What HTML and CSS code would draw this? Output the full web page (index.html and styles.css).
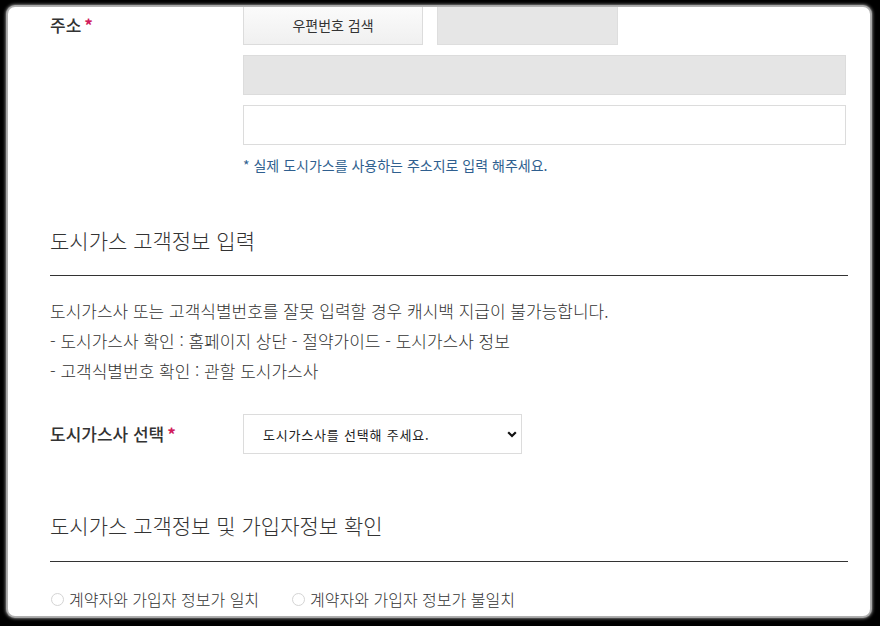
FILE: index.html
```html
<!DOCTYPE html>
<html lang="ko">
<head>
<meta charset="utf-8">
<title>도시가스 고객정보</title>
<link rel="stylesheet" href="styles.css">
</head>
<body>
<div class="frame">
  <div class="content">
    <div class="row addr-row">
      <div class="label">주소<span class="req">*</span></div>
      <div class="fields">
        <div class="zip-line">
          <button class="btn" type="button">우편번호 검색</button>
          <div class="zip-box"></div>
        </div>
        <div class="input input-disabled"></div>
        <div class="input"></div>
        <p class="note">* 실제 도시가스를 사용하는 주소지로 입력 해주세요.</p>
      </div>
    </div>

    <h3 class="sec-title">도시가스 고객정보 입력</h3>
    <div class="info">
      <p>도시가스사 또는 고객식별번호를 잘못 입력할 경우 캐시백 지급이 불가능합니다.</p>
      <p>- 도시가스사 확인 : 홈페이지 상단 - 절약가이드 - 도시가스사 정보</p>
      <p>- 고객식별번호 확인 : 관할 도시가스사</p>
    </div>

    <div class="row select-row">
      <div class="label">도시가스사 선택<span class="req">*</span></div>
      <div class="select">
        <span class="select-text">도시가스사를 선택해 주세요.</span>
        <svg class="chev" width="10" height="7" viewBox="0 0 10 7"><path d="M1.2 1.2 L5 5 L8.8 1.2" fill="none" stroke="#111" stroke-width="2.2"/></svg>
      </div>
    </div>

    <h3 class="sec-title sec-title-2">도시가스 고객정보 및 가입자정보 확인</h3>
    <div class="radios">
      <label class="radio"><span class="circle"></span>계약자와 가입자 정보가 일치</label>
      <label class="radio"><span class="circle"></span>계약자와 가입자 정보가 불일치</label>
    </div>
  </div>
</div>
</body>
</html>
```

FILE: styles.css
```css
html, body {
  margin: 0;
  padding: 0;
  background: #000;
  width: 880px;
  height: 626px;
  overflow: hidden;
}

body {
  font-family: "Noto Sans CJK KR", "Noto Sans", sans-serif;
  color: #333;
}

.frame {
  margin: 7px 10px 0 8px;
  width: 862px;
  height: 609px;
  background: #fff;
  border-radius: 7px;
  box-shadow: 0 0 1px 2px #b0b0b0, 0 0 3px 3px #666;
  overflow: hidden;
}

.content {
  margin-top: -2px;
  padding: 0 22px 0 42px;
}

.row {
  display: flex;
}

.label {
  width: 193px;
  flex: none;
  font-size: 17px;
  font-weight: 500;
  color: #333;
  line-height: 40px;
}

.req {
  color: #d11c5c;
  margin-left: 3px;
  font-weight: 700;
}

.fields {
  width: 603px;
  display: flex;
  flex-direction: column;
  gap: 10px;
}

.zip-line {
  display: flex;
  gap: 14px;
  height: 40px;
}

.btn {
  width: 180px;
  height: 40px;
  margin: 0;
  border: 1px solid #dcdcdc;
  background: linear-gradient(#fbfbfb, #f0f0f0);
  font-family: "Noto Sans CJK KR", sans-serif;
  font-size: 14px;
  color: #333;
  padding: 0;
}

.zip-box {
  width: 181px;
  height: 40px;
  box-sizing: border-box;
  background: #e6e6e6;
  border: 1px solid #dedede;
}

.input {
  height: 40px;
  box-sizing: border-box;
  border: 1px solid #dcdcdc;
  background: #fff;
}

.input-disabled {
  background: #e5e5e5;
}

.note {
  margin: 0;
  font-size: 14px;
  line-height: 20px;
  color: #2f5f8f;
}

.sec-title {
  margin: 50px 0 0;
  font-size: 21px;
  font-weight: 300;
  line-height: 30px;
  color: #333;
  padding-bottom: 20px;
  border-bottom: 1px solid #333;
}

.info {
  margin-top: 20px;
  font-size: 17px;
  font-weight: 300;
  line-height: 30px;
  color: #333;
}

.info p {
  margin: 0;
}

.select-row {
  margin-top: 28px;
}

.select {
  width: 279px;
  height: 40px;
  box-sizing: border-box;
  border: 1px solid #dcdcdc;
  display: flex;
  align-items: center;
  justify-content: space-between;
  padding: 0 4px 0 19px;
  font-size: 13px;
  letter-spacing: 0.8px;
  color: #222;
}

.sec-title-2 {
  margin-top: 56px;
  padding-bottom: 21px;
}

.radios {
  margin-top: 22px;
  display: flex;
  font-size: 16px;
  font-weight: 300;
  line-height: 30px;
  color: #333;
}

.radio {
  display: flex;
  align-items: center;
}

.radio + .radio {
  margin-left: 32px;
}

.circle {
  width: 11px;
  height: 11px;
  border: 1px solid #d4d4d4;
  border-radius: 50%;
  margin: 0 5px 0 1px;
}
```
